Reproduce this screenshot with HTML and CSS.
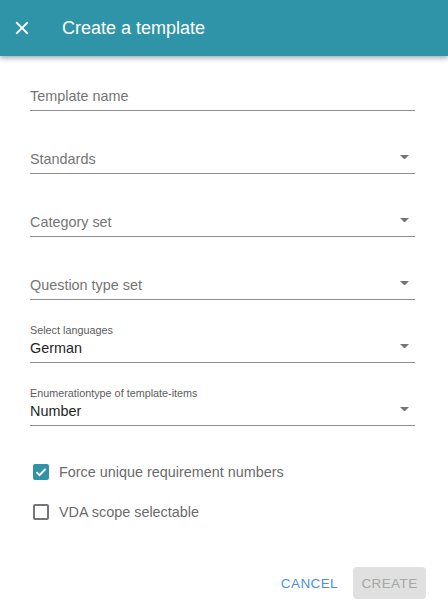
FILE: index.html
```html
<!DOCTYPE html>
<html>
<head>
<meta charset="utf-8">
<link rel="stylesheet" href="styles.css">
</head>
<body>
<div class="dialog">
  <header class="appbar">
    <button class="close" aria-label="close">
      <svg viewBox="0 0 24 24" width="22" height="22"><path d="M19 6.41L17.59 5 12 10.59 6.41 5 5 6.41 10.59 12 5 17.59 6.41 19 12 13.41 17.59 19 19 17.59 13.41 12z" fill="#fff"/></svg>
    </button>
    <h1 class="title">Create a template</h1>
  </header>

  <form class="form">
    <div class="field">
      <div class="input placeholder">Template name</div>
    </div>
    <div class="field">
      <div class="input placeholder">Standards</div>
      <svg class="arrow" viewBox="0 0 10 5"><path d="M0 0l5 5 5-5z"/></svg>
    </div>
    <div class="field">
      <div class="input placeholder">Category set</div>
      <svg class="arrow" viewBox="0 0 10 5"><path d="M0 0l5 5 5-5z"/></svg>
    </div>
    <div class="field">
      <div class="input placeholder">Question type set</div>
      <svg class="arrow" viewBox="0 0 10 5"><path d="M0 0l5 5 5-5z"/></svg>
    </div>
    <div class="field">
      <div class="label">Select languages</div>
      <div class="input value">German</div>
      <svg class="arrow" viewBox="0 0 10 5"><path d="M0 0l5 5 5-5z"/></svg>
    </div>
    <div class="field">
      <div class="label">Enumerationtype of template-items</div>
      <div class="input value">Number</div>
      <svg class="arrow" viewBox="0 0 10 5"><path d="M0 0l5 5 5-5z"/></svg>
    </div>

    <div class="checks">
      <label class="check">
        <span class="box checked">
          <svg viewBox="0 0 16 16" width="16" height="16"><path d="M3.5 8.2l3 3 6-6.2" fill="none" stroke="#fff" stroke-width="1.8"/></svg>
        </span>
        <span class="check-text">Force unique requirement numbers</span>
      </label>
      <label class="check">
        <span class="box"></span>
        <span class="check-text">VDA scope selectable</span>
      </label>
    </div>
  </form>

  <footer class="actions">
    <button class="btn cancel">CANCEL</button>
    <button class="btn create" disabled>CREATE</button>
  </footer>
</div>
</body>
</html>
```

FILE: styles.css
```css
* { box-sizing: border-box; }

html, body {
  margin: 0;
  padding: 0;
  background: #fff;
}

body {
  font-family: "Liberation Sans", Arial, sans-serif;
  width: 448px;
  height: 611px;
  overflow: hidden;
}

.dialog {
  display: flex;
  flex-direction: column;
  height: 611px;
}

.appbar {
  height: 56px;
  background: #3094a8;
  display: flex;
  align-items: center;
  box-shadow: 0 2px 4px rgba(0,0,0,0.25), 0 4px 6px rgba(0,0,0,0.08);
  position: relative;
  z-index: 1;
  flex: none;
}

.close {
  background: none;
  border: 0;
  padding: 0;
  margin-left: 11px;
  width: 22px;
  height: 22px;
  display: flex;
}

.title {
  margin: 0 0 0 29px;
  font-size: 18px;
  font-weight: normal;
  color: #fff;
  line-height: 22px;
}

.form {
  padding: 7px 33px 0 30px;
  display: flex;
  flex-direction: column;
  gap: 15px;
}

.field {
  height: 48px;
  border-bottom: 1px solid #8f8f8f;
  display: flex;
  flex-direction: column;
  justify-content: flex-end;
  padding-bottom: 4px;
  position: relative;
}

.input {
  font-size: 14.4px;
  line-height: 20px;
}

.placeholder { color: #757575; }
.value { color: #1f1f1f; }

.label {
  font-size: 10.8px;
  line-height: 14px;
  color: #5c5c5c;
  margin-bottom: 1px;
}

.arrow {
  position: absolute;
  right: 6px;
  bottom: 14px;
  width: 9px;
  height: 4.5px;
  fill: #757575;
}

.checks {
  margin-top: 21px;
  display: flex;
  flex-direction: column;
  gap: 20px;
  padding-left: 3px;
}

.check {
  display: flex;
  align-items: center;
  height: 20px;
}

.box {
  width: 16px;
  height: 16px;
  border: 2px solid #767676;
  border-radius: 2px;
  display: flex;
  align-items: center;
  justify-content: center;
  flex: none;
}

.box.checked {
  border: 0;
  background: #3094a8;
}

.check-text {
  margin-left: 10px;
  font-size: 14.4px;
  color: #6b6b6b;
}

.actions {
  margin-top: auto;
  display: flex;
  justify-content: flex-end;
  align-items: center;
  gap: 7px;
  padding: 0 22px 12px 0;
}

.btn {
  font-family: "Liberation Sans", Arial, sans-serif;
  font-size: 13.5px;
  letter-spacing: 0.4px;
  border: 0;
  height: 32px;
  border-radius: 4px;
  background: none;
  padding: 0 8px;
}

.cancel {
  color: #4a90e2;
}

.create {
  background: #e0e0e0;
  color: #a6a6a6;
  width: 73px;
}
```
